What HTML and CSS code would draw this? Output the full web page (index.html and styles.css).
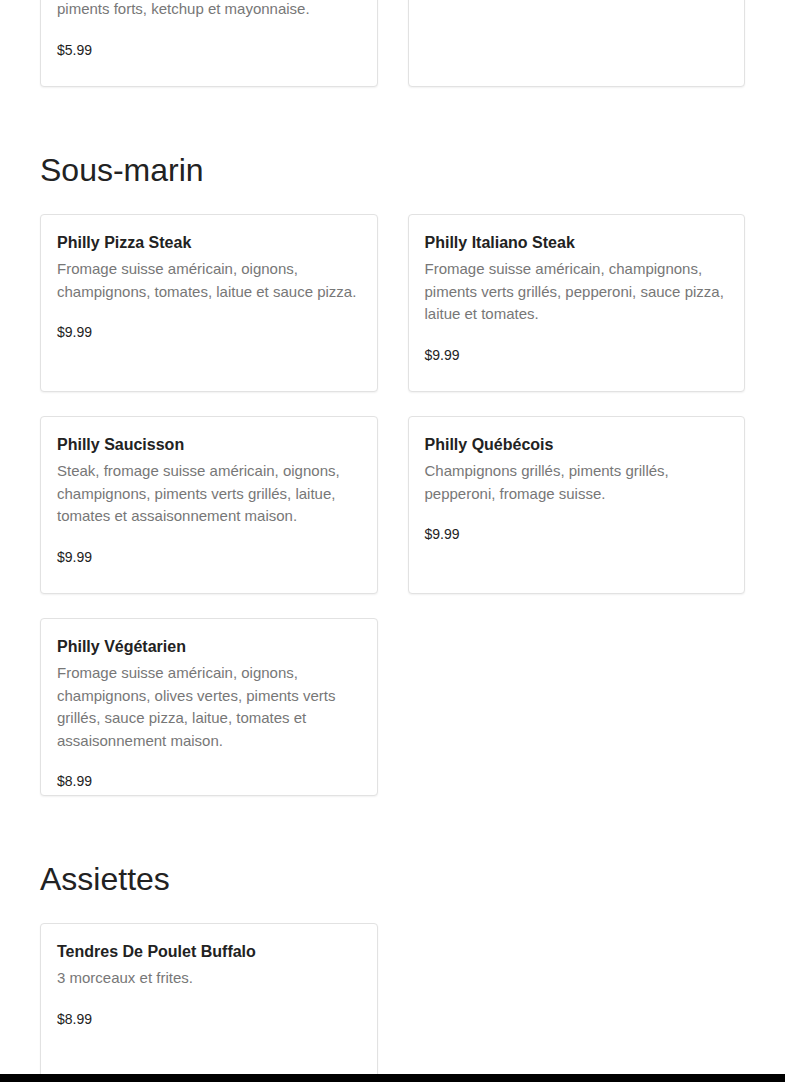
FILE: index.html
```html
<!DOCTYPE html>
<html lang="fr">
<head>
<meta charset="utf-8">
<title>Menu</title>
<link rel="stylesheet" href="styles.css">
</head>
<body>
<main class="page">
  <section class="section">
    <div class="grid">
      <article class="card">
        <h3 class="card-title">Hot-Dog Michigan</h3>
        <p class="card-desc">Deux saucisses grillées, sauce à la viande, oignons, relish, moutarde, <br>piments forts, ketchup et mayonnaise.</p>
        <p class="card-price">$5.99</p>
      </article>
      <article class="card">
        <h3 class="card-title">Hot-Dog Steamé</h3>
        <p class="card-desc">Saucisse à la vapeur, moutarde, relish et chou.</p>
      </article>
    </div>
  </section>

  <section class="section">
    <h2 class="section-title">Sous-marin</h2>
    <div class="grid">
      <article class="card">
        <h3 class="card-title">Philly Pizza Steak</h3>
        <p class="card-desc">Fromage suisse américain, oignons, champignons, tomates, laitue et sauce pizza.</p>
        <p class="card-price">$9.99</p>
      </article>
      <article class="card">
        <h3 class="card-title">Philly Italiano Steak</h3>
        <p class="card-desc">Fromage suisse américain, champignons, piments verts grillés, pepperoni, sauce pizza, laitue et tomates.</p>
        <p class="card-price">$9.99</p>
      </article>
      <article class="card">
        <h3 class="card-title">Philly Saucisson</h3>
        <p class="card-desc">Steak, fromage suisse américain, oignons, champignons, piments verts grillés, laitue, tomates et assaisonnement maison.</p>
        <p class="card-price">$9.99</p>
      </article>
      <article class="card">
        <h3 class="card-title">Philly Québécois</h3>
        <p class="card-desc">Champignons grillés, piments grillés, pepperoni, fromage suisse.</p>
        <p class="card-price">$9.99</p>
      </article>
      <article class="card">
        <h3 class="card-title">Philly Végétarien</h3>
        <p class="card-desc">Fromage suisse américain, oignons, champignons, olives vertes, piments verts grillés, sauce pizza, laitue, tomates et assaisonnement maison.</p>
        <p class="card-price">$8.99</p>
      </article>
    </div>
  </section>

  <section class="section">
    <h2 class="section-title">Assiettes</h2>
    <div class="grid">
      <article class="card">
        <h3 class="card-title">Tendres De Poulet Buffalo</h3>
        <p class="card-desc">3 morceaux et frites.</p>
        <p class="card-price">$8.99</p>
      </article>
    </div>
  </section>
</main>
<div class="bottom-bar"></div>
</body>
</html>
```

FILE: styles.css
```css
* {
  box-sizing: border-box;
}

html, body {
  margin: 0;
  padding: 0;
  background: #ffffff;
}

body {
  font-family: "Liberation Sans", Arial, sans-serif;
  color: #222222;
}

.page {
  margin-top: -91px;
  padding: 0 40px;
}

.section {
  margin-bottom: 64px;
}

.section-title {
  margin: 0 0 25px;
  font-size: 32px;
  line-height: 38px;
  font-weight: 400;
  color: #222222;
}

.grid {
  display: grid;
  grid-template-columns: 1fr 1fr;
  column-gap: 30px;
  row-gap: 24px;
  align-items: start;
}

.card {
  height: 178px;
  overflow: hidden;
  padding: 17px 16px 16px;
  border: 1px solid #e2e2e2;
  border-radius: 4px;
  background: #ffffff;
  box-shadow: 0 1px 2px rgba(0, 0, 0, 0.06);
}

.card-title {
  margin: 0 0 4px;
  font-size: 16px;
  line-height: 22px;
  font-weight: 700;
  color: #222222;
}

.card-desc {
  margin: 0;
  font-size: 15px;
  line-height: 22.5px;
  color: #777777;
}

.card-price {
  margin: 19px 0 0;
  font-size: 14px;
  line-height: 20px;
  color: #222222;
}

.bottom-bar {
  position: fixed;
  left: 0;
  right: 0;
  bottom: 0;
  height: 8px;
  background: #000000;
}
```
